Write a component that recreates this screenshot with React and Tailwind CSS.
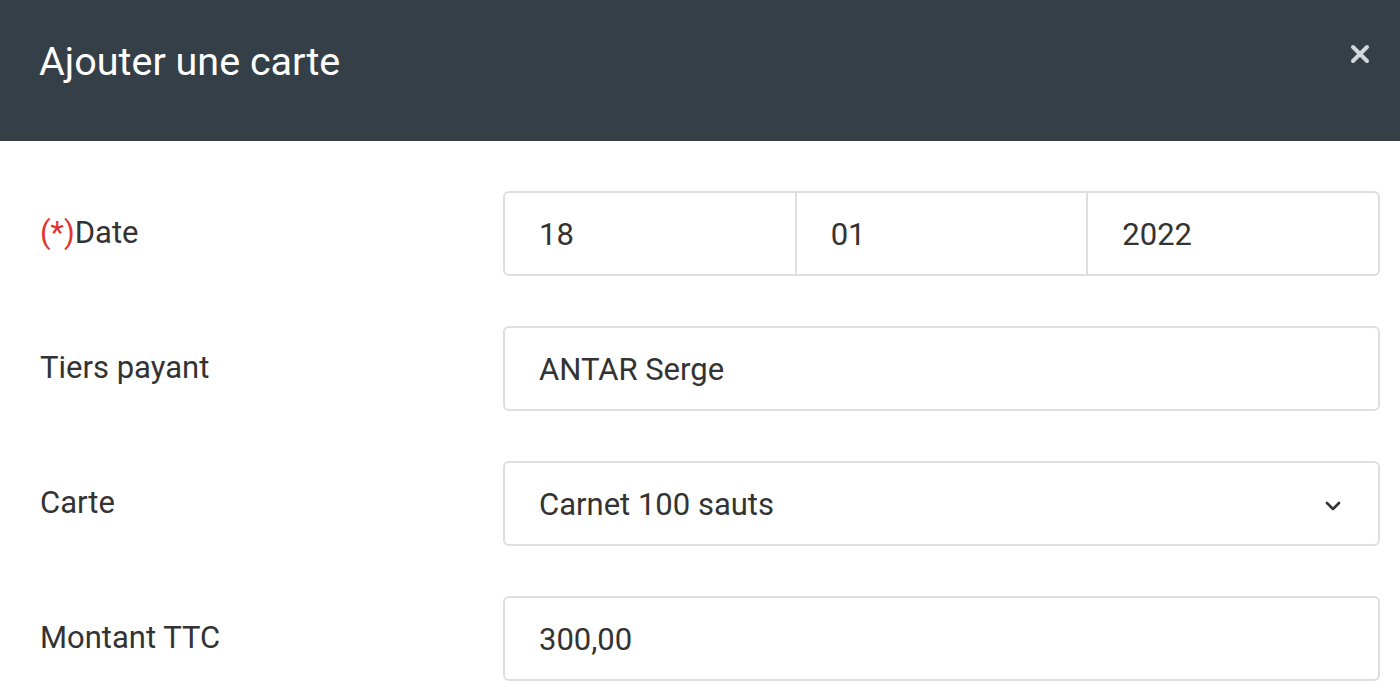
import React from 'react';

const Field = ({ label, required, children }) => (
    <div className="flex items-center h-[85px]">
        <div className="w-[463px] text-[31px] text-[#333]">
            {required && <span className="text-[#e3342f]">(*)</span>}
            {label}
        </div>
        <div className="flex-1">{children}</div>
    </div>
);

const Input = ({ value, className = '' }) => (
    <div className={`h-[85px] flex items-center px-[34px] pt-1 text-[31px] text-[#333] border-2 border-[#dedede] bg-white ${className}`}>
        {value}
    </div>
);

export default function App() {
    return (
        <div className="w-[1400px] h-[700px] bg-white overflow-hidden" style={{ fontFamily: 'Roboto, "Liberation Sans", sans-serif' }}>
            <div className="h-[141px] bg-[#353f47] flex items-center justify-between pl-[39px] pr-[30px]">
                <h1 className="text-[39.5px] text-white -mt-[18px]">Ajouter une carte</h1>
                <button className="text-[#d4d8dc] -mt-[34px]">
                    <svg width="20" height="20" viewBox="0 0 20 20">
                        <path d="M3 3 L17 17 M17 3 L3 17" stroke="currentColor" strokeWidth="4" strokeLinecap="round" />
                    </svg>
                </button>
            </div>
            <div className="pl-[40px] pr-[20px] pt-[50px] flex flex-col gap-[50px]">
                <Field label="Date" required>
                    <div className="flex">
                        <Input value="18" className="flex-1 rounded-l-md" />
                        <Input value="01" className="flex-1 border-l-0 pl-[34px]" />
                        <Input value="2022" className="flex-1 border-l-0 rounded-r-md" />
                    </div>
                </Field>
                <Field label="Tiers payant">
                    <Input value="ANTAR Serge" className="rounded-md" />
                </Field>
                <Field label="Carte">
                    <div className="h-[85px] flex items-center justify-between pl-[34px] pr-[36px] pt-1 text-[31px] text-[#333] border-2 border-[#dedede] rounded-md">
                        <span>Carnet 100 sauts</span>
                        <svg width="18" height="12" viewBox="0 0 18 12">
                            <path d="M3 3 L9 9 L15 3" stroke="#333" strokeWidth="2.6" fill="none" strokeLinecap="round" strokeLinejoin="round" />
                        </svg>
                    </div>
                </Field>
                <Field label="Montant TTC">
                    <Input value="300,00" className="rounded-md" />
                </Field>
            </div>
        </div>
    );
}
